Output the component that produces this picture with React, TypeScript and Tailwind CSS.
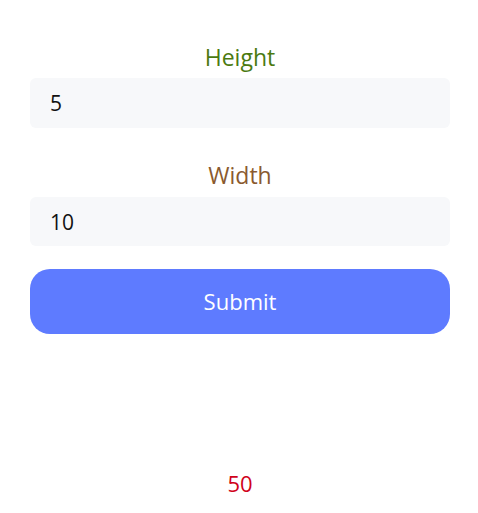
import React, { useState } from "react";

export default function App() {
  const [h, setH] = useState("5");
  const [w, setW] = useState("10");
  return (
    <div className="w-[478px] h-[513px] bg-white pl-[30px] pt-[42px] flex flex-col" style={{ fontFamily: '"Open Sans", "Noto Sans", sans-serif' }}>
      <label className="block w-[420px] text-center text-[23px] leading-[30px] text-[#4b7a10]">Height</label>
      <input
        value={h}
        onChange={(e) => setH(e.target.value)}
        className="mt-[6px] h-[50px] w-[420px] rounded-[6px] bg-[#f7f8fa] px-[20px] text-[21px] text-[#111] outline-none"
      />
      <label className="mt-[32px] block w-[420px] text-center text-[23px] leading-[30px] text-[#8a5a2e]">Width</label>
      <input
        value={w}
        onChange={(e) => setW(e.target.value)}
        className="mt-[7px] h-[49px] w-[420px] rounded-[6px] bg-[#f7f8fa] px-[20px] text-[21px] text-[#111] outline-none"
      />
      <button className="mt-[23px] h-[65px] w-[420px] rounded-[20px] bg-[#5e7bff] text-[22px] text-white">Submit</button>
      <div className="mt-[134px] w-[420px] text-center text-[22px] leading-[30px] text-[#d0021b]">50</div>
    </div>
  );
}
